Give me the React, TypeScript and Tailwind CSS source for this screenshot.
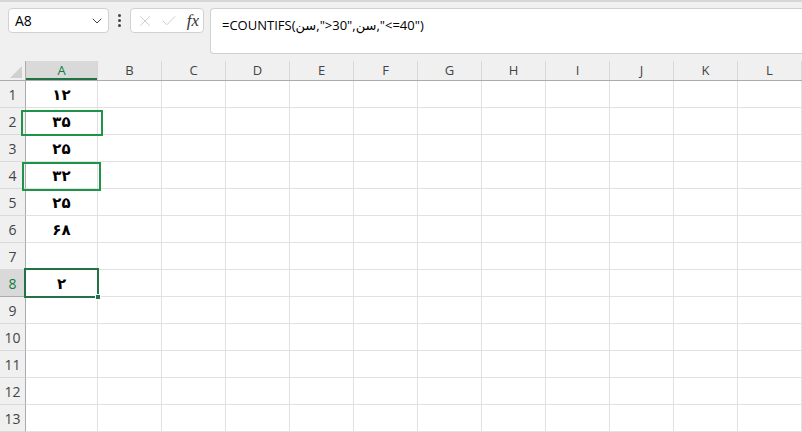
import { ChevronDown, X, Check } from 'lucide-react';

const cols = ['A', 'B', 'C', 'D', 'E', 'F', 'G', 'H', 'I', 'J', 'K', 'L'];
const values: Record<number, string> = {
  1: '۱۲',
  2: '۳۵',
  3: '۲۵',
  4: '۳۲',
  5: '۲۵',
  6: '۶۸',
  8: '۲',
};
const rows = Array.from({ length: 13 }, (_, i) => i + 1);

function colWidth(c: string) {
  return c === 'A' ? 'w-[72px]' : 'w-[64px]';
}

export default function App() {
  return (
    <div
      className="w-[802px] h-[432px] overflow-hidden bg-white text-[#222]"
      style={{ fontFamily: '"Open Sans", "DejaVu Sans", sans-serif' }}
    >
      {/* Formula bar */}
      <div className="h-[61px] bg-[#f0f0f0] border-t-2 border-[#d6d6d6] flex items-start pt-[6px] pl-[8px]">
        <div className="w-[101px] h-[25px] bg-white border border-[#d1d1d1] rounded-[4px] flex items-center justify-between pl-[6px] pr-[3px]">
          <span className="text-[14px] text-black">A8</span>
          <ChevronDown size={16} strokeWidth={1.5} className="text-[#444]" />
        </div>
        <div className="w-[21px] h-[25px] flex flex-col items-center justify-center gap-[2px]">
          <span className="w-[3px] h-[3px] rounded-full bg-[#444]" />
          <span className="w-[3px] h-[3px] rounded-full bg-[#444]" />
          <span className="w-[3px] h-[3px] rounded-full bg-[#444]" />
        </div>
        <div className="w-[74px] h-[25px] bg-white border border-[#d1d1d1] rounded-[4px] flex items-center pl-[5px] pr-[4px] gap-[6px]">
          <X size={18} strokeWidth={1} className="text-[#bdbdbd]" />
          <Check size={18} strokeWidth={1} className="text-[#bdbdbd]" />
          <span
            className="ml-auto text-[17px] italic text-[#333] leading-none"
            style={{ fontFamily: '"Liberation Serif", serif' }}
          >
            fx
          </span>
        </div>
        <div className="ml-[6px] flex-1 h-[46px] bg-white border border-r-0 border-[#d1d1d1] rounded-l-[4px] pl-[11px] pt-[3px]">
          <span className="text-[13px] text-black" dir="ltr">
            =COUNTIFS(<bdi>سن</bdi>,"&gt;30",<bdi>سن</bdi>,"&lt;=40")
          </span>
        </div>
      </div>

      {/* Grid */}
      <div className="relative">
        <div className="flex h-[20px] bg-[#f0f0f0] border-b border-[#ababab]">
          <div className="w-[26px] h-full border-r border-[#ababab] relative">
            <div className="absolute right-[3px] bottom-[2px] w-0 h-0 border-l-[12px] border-l-transparent border-b-[12px] border-b-[#d0d0d0]" />
          </div>
          {cols.map((c) => (
            <div
              key={c}
              className={`${colWidth(c)} h-full shrink-0 flex items-center justify-center text-[13px] border-r ${
                c === 'A'
                  ? 'bg-[#d9d9d9] text-[#107c41] border-[#d6d6d6] shadow-[inset_0_-2px_0_#217346]'
                  : 'text-[#444] border-[#d9d9d9]'
              }`}
            >
              {c}
            </div>
          ))}
        </div>
        {rows.map((r) => (
          <div key={r} className="flex h-[27px]">
            <div
              className={`w-[26px] h-full shrink-0 border-r border-b flex items-end justify-center pb-[2px] text-[14px] ${
                r === 8
                  ? 'bg-[#d9d9d9] text-[#107c41] border-[#ababab]'
                  : 'bg-[#f0f0f0] text-[#444] border-[#ababab] border-b-[#d9d9d9]'
              }`}
            >
              {r}
            </div>
            {cols.map((c) => (
              <div
                key={c}
                className={`${colWidth(c)} h-full shrink-0 border-r border-b border-[#e1e1e1] flex items-center justify-center text-[15px] font-bold text-black`}
              >
                {c === 'A' ? values[r] ?? '' : ''}
              </div>
            ))}
          </div>
        ))}

        {/* highlight boxes */}
        <div className="absolute left-[21px] top-[49px] w-[82px] h-[26px] border-2 border-[#1e9448]" />
        <div className="absolute left-[22px] top-[101px] w-[79px] h-[29px] border-2 border-[#1e9448]" />
        {/* active cell A8 */}
        <div className="absolute left-[24px] top-[207px] w-[75px] h-[30px] border-2 border-[#217346]" />
        <div className="absolute left-[95px] top-[233px] w-[6px] h-[6px] bg-[#217346] border border-white" />
      </div>
    </div>
  );
}
